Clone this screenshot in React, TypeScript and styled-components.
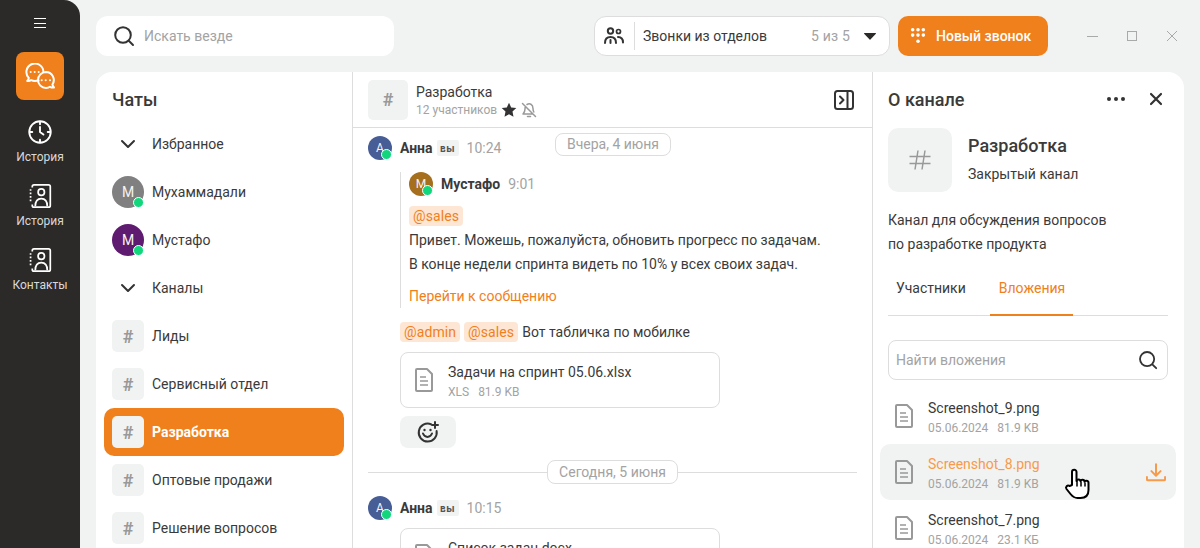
import React from "react";
import styled, { createGlobalStyle } from "styled-components";

const ORANGE = "#f0801c";
const TEXT = "#3a3a3a";
const GRAY = "#a3a3a3";
const LINE = "#dcdddc";
const SOFT = "#f1f3f2";

const Global = createGlobalStyle`
  html, body { margin: 0; padding: 0; height: 100%; overflow: hidden; }
  body { font-family: Roboto, "Noto Sans", sans-serif; color: ${TEXT}; background: ${SOFT}; }
  #root { height: 100%; }
  * { box-sizing: border-box; }
`;

const Page = styled.div`
  display: flex;
  width: 1200px;
  height: 548px;
  overflow: hidden;
`;

// левая тёмная панель
const Rail = styled.nav`
  width: 80px;
  flex: none;
  background: #2b2a28;
  border-top-right-radius: 16px;
  display: flex;
  flex-direction: column;
  align-items: center;
  padding-top: 18px;
`;
const Burger = styled.div`
  width: 12px;
  height: 10px;
  border-top: 1px solid #fff;
  border-bottom: 1px solid #fff;
  position: relative;
  margin-bottom: 24px;
  &::after {
    content: "";
    position: absolute;
    left: 0;
    right: 0;
    top: 3.5px;
    height: 1px;
    background: #fff;
  }
`;
const RailActive = styled.div`
  width: 48px;
  height: 48px;
  border-radius: 8px;
  background: ${ORANGE};
  display: flex;
  align-items: center;
  justify-content: center;
  margin-bottom: 16px;
`;
const RailItem = styled.div`
  display: flex;
  flex-direction: column;
  align-items: center;
  width: 80px;
  height: 64px;
  padding-top: 4px;
  color: #d9d9d9;
  font-size: 12px;
  line-height: 18px;
  svg { margin-bottom: 4px; display: block; }
`;

const Main = styled.div`
  flex: 1;
  min-width: 0;
  display: flex;
  flex-direction: column;
  gap: 16px;
  padding: 16px 16px 0;
`;
const TopBar = styled.header`
  display: flex;
  align-items: center;
  height: 40px;
  flex: none;
`;
const GlobalSearch = styled.div`
  width: 298px;
  height: 40px;
  background: #fff;
  border-radius: 12px;
  display: flex;
  align-items: center;
  gap: 9px;
  padding-left: 17px;
  margin-right: 200px;
  font-size: 14px;
  color: ${GRAY};
`;
const CallsPill = styled.div`
  width: 296px;
  height: 40px;
  background: #fff;
  border: 1px solid ${LINE};
  border-radius: 12px;
  display: flex;
  align-items: center;
  padding: 0 13px 0 9px;
  font-size: 14px;
  margin-right: 8px;
`;
const PillDivider = styled.span`
  width: 1px;
  height: 28px;
  background: ${LINE};
  margin: 0 8px 0 10px;
`;
const PillCount = styled.span`
  margin-left: auto;
  margin-right: 14px;
  color: ${GRAY};
  letter-spacing: 0.2px;
`;
const CallButton = styled.div`
  width: 150px;
  height: 40px;
  background: ${ORANGE};
  border-radius: 10px;
  display: flex;
  align-items: center;
  padding-left: 12px;
  gap: 10px;
  color: #fff;
  font-size: 14px;
  font-weight: 500;
`;
const WindowControls = styled.div`
  display: flex;
  align-items: center;
  margin-left: auto;
  gap: 26px;
  padding-right: 5px;
`;

const Panels = styled.div`
  flex: 1;
  min-height: 0;
  background: #fff;
  border-radius: 16px 16px 0 0;
  display: flex;
  overflow: hidden;
`;

// список чатов
const ChatColumn = styled.aside`
  width: 257px;
  flex: none;
  border-right: 1px solid ${LINE};
  padding: 0 8px;
`;
const PanelTitle = styled.h2`
  margin: 0;
  height: 54px;
  display: flex;
  align-items: center;
  font-size: 18px;
  font-weight: 500;
`;
const ChatTitle = styled(PanelTitle)`
  height: 48px;
  padding: 6px 0 0 8px;
`;
const GroupRow = styled.div`
  height: 48px;
  display: flex;
  align-items: center;
  padding-left: 16px;
  gap: 16px;
  font-size: 14px;
`;
const ChatRow = styled.div<{ $active?: boolean }>`
  height: 48px;
  display: flex;
  align-items: center;
  gap: 8px;
  padding-left: 8px;
  border-radius: 10px;
  font-size: 14px;
  font-weight: ${({ $active }) => ($active ? 700 : 400)};
  color: ${({ $active }) => ($active ? "#fff" : TEXT)};
  background: ${({ $active }) => ($active ? ORANGE : "transparent")};
`;
const Avatar = styled.div<{ $bg: string; $size: number }>`
  position: relative;
  width: ${({ $size }) => $size}px;
  height: ${({ $size }) => $size}px;
  flex: none;
  border-radius: 50%;
  background: ${({ $bg }) => $bg};
  color: #f4f4f4;
  font-size: ${({ $size }) => ($size > 24 ? 14 : 12)}px;
  display: flex;
  align-items: center;
  justify-content: center;
  &::after {
    content: "";
    position: absolute;
    right: 0;
    bottom: 0;
    width: 9px;
    height: 9px;
    border-radius: 50%;
    background: #12d67c;
    border: 1px solid #fff;
  }
`;
const HashBox = styled.div<{ $size: number; $font: number }>`
  width: ${({ $size }) => $size}px;
  height: ${({ $size }) => $size}px;
  flex: none;
  background: ${SOFT};
  border-radius: ${({ $size }) => ($size > 40 ? 10 : 5)}px;
  color: #999;
  font-size: ${({ $font }) => $font}px;
  font-weight: 700;
  display: flex;
  align-items: center;
  justify-content: center;
`;

// центральная колонка
const ChatPane = styled.section`
  width: 520px;
  flex: none;
  border-right: 1px solid ${LINE};
  display: flex;
  flex-direction: column;
`;
const PaneHeader = styled.div`
  height: 56px;
  flex: none;
  border-bottom: 1px solid ${LINE};
  display: flex;
  align-items: center;
  padding: 0 18px 0 15px;
  gap: 8px;
`;
const HeaderText = styled.div`
  flex: 1;
  font-size: 14px;
  line-height: 20px;
`;
const HeaderMeta = styled.div`
  display: flex;
  align-items: center;
  gap: 4px;
  color: ${GRAY};
  font-size: 12px;
  line-height: 16px;
`;
const MessageList = styled.div`
  position: relative;
  flex: 1;
  overflow: hidden;
  padding: 8px 15px 0;
`;
const FloatingDate = styled.div`
  position: absolute;
  top: 5px;
  left: 202px;
  width: 116px;
  height: 23px;
`;
const DatePill = styled.div`
  height: 100%;
  background: #fff;
  border: 1px solid ${LINE};
  border-radius: 8px;
  color: ${GRAY};
  font-size: 14px;
  padding: 0 11px 1px;
  display: flex;
  align-items: center;
  justify-content: center;
  white-space: nowrap;
`;
const AuthorRow = styled.div`
  display: flex;
  align-items: center;
  height: 24px;
  gap: 8px;
  font-size: 14px;
`;
const AuthorName = styled.b`
  font-weight: 700;
`;
const YouBadge = styled.span`
  width: 22px;
  height: 16px;
  margin-left: -4px;
  border-radius: 2px;
  background: ${SOFT};
  color: #555;
  font-size: 10px;
  font-weight: 700;
  letter-spacing: 0.6px;
  display: flex;
  align-items: center;
  justify-content: center;
`;
const Time = styled.span`
  color: ${GRAY};
`;
const Body = styled.div`
  margin-left: 32px;
  font-size: 14px;
`;
const Quote = styled.div`
  margin: 12px 0 12px 32px;
  height: 136px;
  border-left: 1px solid ${LINE};
  padding-left: 8px;
  font-size: 14px;
`;
const Tag = styled.span`
  display: inline-block;
  height: 20px;
  line-height: 20px;
  padding: 0 4px;
  margin-right: 4px;
  border-radius: 4px;
  background: #fde6d3;
  color: ${ORANGE};
  font-size: 14px;
  letter-spacing: 0.1px;
`;
const QuoteTags = styled.div`
  height: 20px;
  margin: 10px 0 2px;
`;
const TextLine = styled.div`
  line-height: 24px;
  height: 24px;
  white-space: nowrap;
`;
const QuoteLink = styled(TextLine)`
  margin-top: 8px;
  color: ${ORANGE};
`;
const FileCard = styled.div`
  width: 320px;
  height: 56px;
  margin-top: 8px;
  border: 1px solid ${LINE};
  border-radius: 8px;
  display: flex;
  align-items: center;
  gap: 15px;
  padding-left: 14px;
`;
const FileInfo = styled.div`
  padding-top: 3px;
`;
const FileName = styled.div<{ $hover?: boolean }>`
  font-size: 14px;
  line-height: 18px;
  color: ${({ $hover }) => ($hover ? "#f79a4b" : TEXT)};
`;
const FileMeta = styled.div`
  margin-top: 3px;
  display: flex;
  gap: 9px;
  font-size: 12px;
  line-height: 16px;
  color: ${GRAY};
`;
const ReactionButton = styled.div`
  width: 56px;
  height: 32px;
  margin-top: 8px;
  background: ${SOFT};
  border-radius: 8px;
  display: flex;
  align-items: center;
  justify-content: center;
`;
const DateDivider = styled.div`
  height: 24px;
  margin: 12px 0;
  display: flex;
  align-items: center;
  justify-content: center;
  position: relative;
  &::before {
    content: "";
    position: absolute;
    left: 0;
    right: 0;
    top: 12px;
    height: 1px;
    background: ${LINE};
  }
  ${DatePill} {
    position: relative;
    width: 131px;
  }
`;

// правая колонка
const InfoPane = styled.section`
  flex: 1;
  min-width: 0;
  padding: 0 16px 0 15px;
`;
const InfoHead = styled.div`
  display: flex;
  align-items: center;
  height: 54px;
  margin-bottom: 2px;
  ${PanelTitle} { flex: 1; }
`;
const InfoActions = styled.div`
  display: flex;
  align-items: center;
  gap: 23px;
  margin-right: 5px;
`;
const ChannelCard = styled.div`
  display: flex;
  gap: 16px;
  height: 64px;
`;
const ChannelName = styled.div`
  font-size: 18px;
  font-weight: 500;
  line-height: 36px;
`;
const ChannelKind = styled.div`
  font-size: 14px;
  line-height: 20px;
`;
const Description = styled.p`
  margin: 16px 0 0;
  font-size: 14px;
  line-height: 24px;
`;
const Tabs = styled.div`
  display: flex;
  margin-top: 4px;
  height: 56px;
  border-bottom: 1px solid ${LINE};
`;
const TabItem = styled.div<{ $active?: boolean }>`
  padding: 2px 8px 0;
  padding-left: ${({ $active }) => ($active ? 9 : 8)}px;
  margin-right: ${({ $active }) => ($active ? 0 : 16)}px;
  min-width: ${({ $active }) => ($active ? 83 : 0)}px;
  height: 56px;
  display: flex;
  align-items: center;
  font-size: 14px;
  color: ${({ $active }) => ($active ? ORANGE : TEXT)};
  border-bottom: 2px solid ${({ $active }) => ($active ? ORANGE : "transparent")};
`;
const AttachSearch = styled.div`
  height: 40px;
  margin-top: 24px;
  border: 1px solid ${LINE};
  border-radius: 8px;
  display: flex;
  align-items: center;
  justify-content: space-between;
  padding: 0 9px 0 7px;
  font-size: 14px;
  color: ${GRAY};
`;
const AttachList = styled.div`
  margin: 8px -8px 0;
`;
const AttachRow = styled.div<{ $hover?: boolean }>`
  position: relative;
  height: 56px;
  display: flex;
  align-items: center;
  gap: 15px;
  padding: 0 10px 0 15px;
  border-radius: 10px;
  background: ${({ $hover }) => ($hover ? SOFT : "transparent")};
`;
const DownloadIcon = styled.svg`
  margin-left: auto;
`;
const Pointer = styled.svg`
  position: absolute;
  left: 184px;
  top: 24px;
`;

const SearchIcon = ({ size = 22 }: { size?: number }) => (
  <svg width={size} height={size} viewBox="0 0 22 22" fill="none" stroke="#333" strokeWidth="2" strokeLinecap="round">
    <circle cx="10" cy="10" r="7.8" />
    <path d="M16 16l4 4" />
  </svg>
);

const FileIcon = () => (
  <svg width="18" height="24" viewBox="0 0 18 24" fill="none" stroke="#999" strokeWidth="2" strokeLinejoin="round" style={{ flex: "none" }}>
    <path d="M1 2a1 1 0 0 1 1-1h10l5 5v16a1 1 0 0 1-1 1H2a1 1 0 0 1-1-1z" />
    <path d="M5 9h6M5 13h8M5 17h8" strokeWidth="1.600" />
  </svg>
);

const Chevron = () => (
  <svg width="16" height="10" viewBox="0 0 16 10" fill="none" stroke="#333" strokeWidth="2" strokeLinecap="round" strokeLinejoin="round">
    <path d="M2 2l6 6 6-6" />
  </svg>
);

const ContactIcon = () => (
  <svg width="24" height="24" viewBox="0 0 26 28" fill="none" stroke="#fff" strokeWidth="2">
    <path d="M4 4V3a2 2 0 0 1 2-2h17a2 2 0 0 1 2 2v22a2 2 0 0 1-2 2H6a2 2 0 0 1-2-2v-1" />
    <path d="M1 7h3M1 11h3M1 15h3M1 19h3" strokeDasharray="2 1" />
    <circle cx="14.500" cy="9.500" r="3.700" />
    <path d="M7.500 26c0-6 3-9 7-9s7 3 7 9" />
  </svg>
);

const App = () => (
  <Page>
    <Global />
    <Rail>
      <Burger />
      <RailActive>
        <svg width="30" height="26" viewBox="0 0 30 26" fill="none" stroke="#fff" strokeWidth="2" strokeLinejoin="round" strokeLinecap="round">
          <path d="M13.500 17.300c-1.100.4-2.300.7-3.500.7-1.400 0-2.700-.3-3.800-.9-1.100.7-2.500 1-4 .8.8-.8 1.300-1.800 1.600-3A8.500 8.500 0 1 1 18.400 8.500" />
          <path d="M21 9a8 8 0 1 0 0 16c1.500 0 3-.4 4-1.200 1 .6 2.500.9 4 .7-.8-.8-1.300-1.800-1.600-3A8 8 0 0 0 21 9z" />
          <g fill="#fff" stroke="none">
            <circle cx="5.700" cy="9" r="1" /><circle cx="9.700" cy="9" r="1" /><circle cx="13.700" cy="9" r="1" />
            <circle cx="16.700" cy="17.300" r="1" /><circle cx="20.700" cy="17.300" r="1" /><circle cx="25" cy="17.300" r="1" />
          </g>
        </svg>
      </RailActive>
      <RailItem>
        <svg width="24" height="24" viewBox="0 0 28 28" fill="none" stroke="#fff" strokeWidth="2.200" strokeLinecap="round" strokeLinejoin="round">
          <circle cx="14" cy="14" r="12.500" />
          <path d="M14 2v3M14 23v3M2 14h3M23 14h3M14 8v6l4 3" />
        </svg>
        История
      </RailItem>
      <RailItem>
        <ContactIcon />
        История
      </RailItem>
      <RailItem>
        <ContactIcon />
        Контакты
      </RailItem>
    </Rail>
    <Main>
      <TopBar>
        <GlobalSearch>
          <SearchIcon />
          Искать везде
        </GlobalSearch>
        <CallsPill>
          <svg width="20" height="18" viewBox="0 0 20 18" fill="none" stroke="#333" strokeWidth="2" strokeLinecap="round">
            <circle cx="6.500" cy="4" r="2.700" />
            <circle cx="14.500" cy="4.500" r="2" strokeWidth="1.700" />
            <path d="M1 16c0-3.500 2-6 5.500-6s5.500 2.500 5.500 6M14 10c3 0 5 2 5 5.500" />
            <path d="M6.500 13v3" />
          </svg>
          <PillDivider />
          Звонки из отделов
          <PillCount>5 из 5</PillCount>
          <svg width="12" height="8" viewBox="0 0 12 8">
            <path d="M0.500 1h11a.5.5 0 0 1 .4.8L6.400 7.500a.5.5 0 0 1-.8 0L.1 1.800A.5.5 0 0 1 .5 1z" fill="#2b2a28" />
          </svg>
        </CallsPill>
        <CallButton>
          <svg width="16" height="18" viewBox="0 0 18 20" fill="#fff">
            <circle cx="3" cy="3" r="2" /><circle cx="9" cy="3" r="2" /><circle cx="15" cy="3" r="2" />
            <circle cx="3" cy="9" r="2" /><circle cx="9" cy="9" r="2" /><circle cx="15" cy="9" r="2" />
            <circle cx="9" cy="16" r="2" />
          </svg>
          Новый звонок
        </CallButton>
        <WindowControls>
          <svg width="14" height="14" viewBox="0 0 14 14" stroke="#a9a9a9" fill="none"><path d="M2 7.500h11" /></svg>
          <svg width="14" height="14" viewBox="0 0 14 14" stroke="#a9a9a9" fill="none"><rect x="2.500" y="2.500" width="9" height="9" /></svg>
          <svg width="14" height="14" viewBox="0 0 14 14" stroke="#a9a9a9" fill="none"><path d="M2 2l10 10M12 2L2 12" /></svg>
        </WindowControls>
      </TopBar>
      <Panels>
        <ChatColumn>
          <ChatTitle>Чаты</ChatTitle>
          <GroupRow><Chevron />Избранное</GroupRow>
          <ChatRow><Avatar $bg="#808080" $size={32}>М</Avatar>Мухаммадали</ChatRow>
          <ChatRow><Avatar $bg="#5e1b70" $size={32}>М</Avatar>Мустафо</ChatRow>
          <GroupRow><Chevron />Каналы</GroupRow>
          {["Лиды", "Сервисный отдел", "Разработка", "Оптовые продажи", "Решение вопросов"].map((name) => (
            <ChatRow key={name} $active={name === "Разработка"}>
              <HashBox $size={32} $font={18}>#</HashBox>
              {name}
            </ChatRow>
          ))}
        </ChatColumn>
        <ChatPane>
          <PaneHeader>
            <HashBox $size={40} $font={18}>#</HashBox>
            <HeaderText>
              Разработка
              <HeaderMeta>
                12 участников
                <svg width="16" height="16" viewBox="0 0 16 16"><path d="M8 .8l2.200 4.700 5.100.6-3.800 3.500 1 5.100L8 12.200l-4.500 2.500 1-5.100L.7 6.100l5.100-.6z" fill="#333" /></svg>
                <svg width="16" height="16" viewBox="0 0 16 16" fill="none" stroke="#999" strokeWidth="1.500" strokeLinecap="round" strokeLinejoin="round">
                  <path d="M4.500 4.500C4 5.200 4 6 4 7c0 3-1.500 4.500-2 5h10M6 2.500c2.500-1.500 6-.5 6 4 0 1.500.3 2.500.8 3.500M6.500 14.500h3M1.500 1.500l13 13" />
                </svg>
              </HeaderMeta>
            </HeaderText>
            <svg width="20" height="20" viewBox="0 0 20 20" fill="none" stroke="#333" strokeWidth="2" strokeLinecap="round" strokeLinejoin="round">
              <rect x="1" y="1" width="18" height="18" rx="2.500" />
              <path d="M13.500 1v18M6 6.500l3.500 3.500L6 13.500" />
            </svg>
          </PaneHeader>
          <MessageList>
            <FloatingDate><DatePill>Вчера, 4 июня</DatePill></FloatingDate>
            <AuthorRow>
              <Avatar $bg="#465d96" $size={24}>А</Avatar>
              <AuthorName>Анна</AuthorName>
              <YouBadge>вы</YouBadge>
              <Time>10:24</Time>
            </AuthorRow>
            <Quote>
              <AuthorRow>
                <Avatar $bg="#a66f1e" $size={24}>М</Avatar>
                <AuthorName>Мустафо</AuthorName>
                <Time>9:01</Time>
              </AuthorRow>
              <QuoteTags><Tag>@sales</Tag></QuoteTags>
              <TextLine>Привет. Можешь, пожалуйста, обновить прогресс по задачам.</TextLine>
              <TextLine>В конце недели спринта видеть по 10% у всех своих задач.</TextLine>
              <QuoteLink>Перейти к сообщению</QuoteLink>
            </Quote>
            <Body>
              <TextLine><Tag>@admin</Tag><Tag>@sales</Tag>Вот табличка по мобилке</TextLine>
              <FileCard>
                <FileIcon />
                <FileInfo>
                  <FileName>Задачи на спринт 05.06.xlsx</FileName>
                  <FileMeta><span>XLS</span><span>81.9 KB</span></FileMeta>
                </FileInfo>
              </FileCard>
              <ReactionButton>
                <svg width="22" height="22" viewBox="0 0 22 22" fill="none" stroke="#333" strokeWidth="2" strokeLinecap="round">
                  <path d="M14 3.200A9 9 0 1 0 19.600 10" />
                  <path d="M6 12.500c1 2.500 2.800 3.500 4.500 3.500s3.500-1 4.500-3.500M18 1v6M15 4h6" />
                  <circle cx="7.500" cy="9" r="1.200" fill="#333" stroke="none" />
                  <circle cx="13.500" cy="9" r="1.200" fill="#333" stroke="none" />
                </svg>
              </ReactionButton>
            </Body>
            <DateDivider><DatePill>Сегодня, 5 июня</DatePill></DateDivider>
            <AuthorRow>
              <Avatar $bg="#465d96" $size={24}>А</Avatar>
              <AuthorName>Анна</AuthorName>
              <YouBadge>вы</YouBadge>
              <Time>10:15</Time>
            </AuthorRow>
            <Body>
              <FileCard>
                <FileIcon />
                <FileInfo>
                  <FileName>Список задач.docx</FileName>
                  <FileMeta><span>DOC</span><span>81.9 KB</span></FileMeta>
                </FileInfo>
              </FileCard>
            </Body>
          </MessageList>
        </ChatPane>
        <InfoPane>
          <InfoHead>
            <PanelTitle>О канале</PanelTitle>
            <InfoActions>
              <svg width="20" height="6" viewBox="0 0 20 6" fill="#333"><circle cx="3" cy="3" r="2" /><circle cx="10" cy="3" r="2" /><circle cx="17" cy="3" r="2" /></svg>
              <svg width="14" height="14" viewBox="0 0 14 14" stroke="#333" strokeWidth="2.200" strokeLinecap="round"><path d="M2 2l10 10M12 2L2 12" /></svg>
            </InfoActions>
          </InfoHead>
          <ChannelCard>
            <HashBox $size={64} $font={32}>
              <svg width="22" height="20" viewBox="0 0 22 20" fill="none" stroke="#999" strokeWidth="1.500">
                <path d="M9 0.500L6 19.500M16 0.500l-3 19M0.500 6.500h21M0.500 13.500h21" />
              </svg>
            </HashBox>
            <div>
              <ChannelName>Разработка</ChannelName>
              <ChannelKind>Закрытый канал</ChannelKind>
            </div>
          </ChannelCard>
          <Description>
            Канал для обсуждения вопросов
            <br />
            по разработке продукта
          </Description>
          <Tabs>
            <TabItem>Участники</TabItem>
            <TabItem $active>Вложения</TabItem>
          </Tabs>
          <AttachSearch>
            Найти вложения
            <SearchIcon size={20} />
          </AttachSearch>
          <AttachList>
            <AttachRow>
              <FileIcon />
              <FileInfo>
                <FileName>Screenshot_9.png</FileName>
                <FileMeta><span>05.06.2024</span><span>81.9 KB</span></FileMeta>
              </FileInfo>
            </AttachRow>
            <AttachRow $hover>
              <FileIcon />
              <FileInfo>
                <FileName $hover>Screenshot_8.png</FileName>
                <FileMeta><span>05.06.2024</span><span>81.9 KB</span></FileMeta>
              </FileInfo>
              <DownloadIcon width="20" height="19" viewBox="0 0 22 20" fill="none" stroke="#f79a4b" strokeWidth="2.200" strokeLinecap="round" strokeLinejoin="round">
                <path d="M11 1v12M6 8.500l5 5 5-5M1 15v2.500a1 1 0 0 0 1 1h18a1 1 0 0 0 1-1V15" />
              </DownloadIcon>
              <Pointer width="26" height="32" viewBox="0 0 26 32" fill="#fff" stroke="#000" strokeWidth="2" strokeLinejoin="round" strokeLinecap="round">
                <path d="M8 17V4a2.200 2.200 0 0 1 4.500 0v9c0-2 4-2 4 .3 0-2 4-2 4 .5 0-1.500 4-1.500 4 1V22c0 5-3 8-8 8h-3c-3 0-5-1.500-7-4l-4-5c-1.500-2 1-4.500 3-3z" />
                <path d="M13 13v5M17 14v4M21 15v3" strokeWidth="1.500" />
              </Pointer>
            </AttachRow>
            <AttachRow>
              <FileIcon />
              <FileInfo>
                <FileName>Screenshot_7.png</FileName>
                <FileMeta><span>05.06.2024</span><span>23.1 КБ</span></FileMeta>
              </FileInfo>
            </AttachRow>
          </AttachList>
        </InfoPane>
      </Panels>
    </Main>
  </Page>
);

export default App;
